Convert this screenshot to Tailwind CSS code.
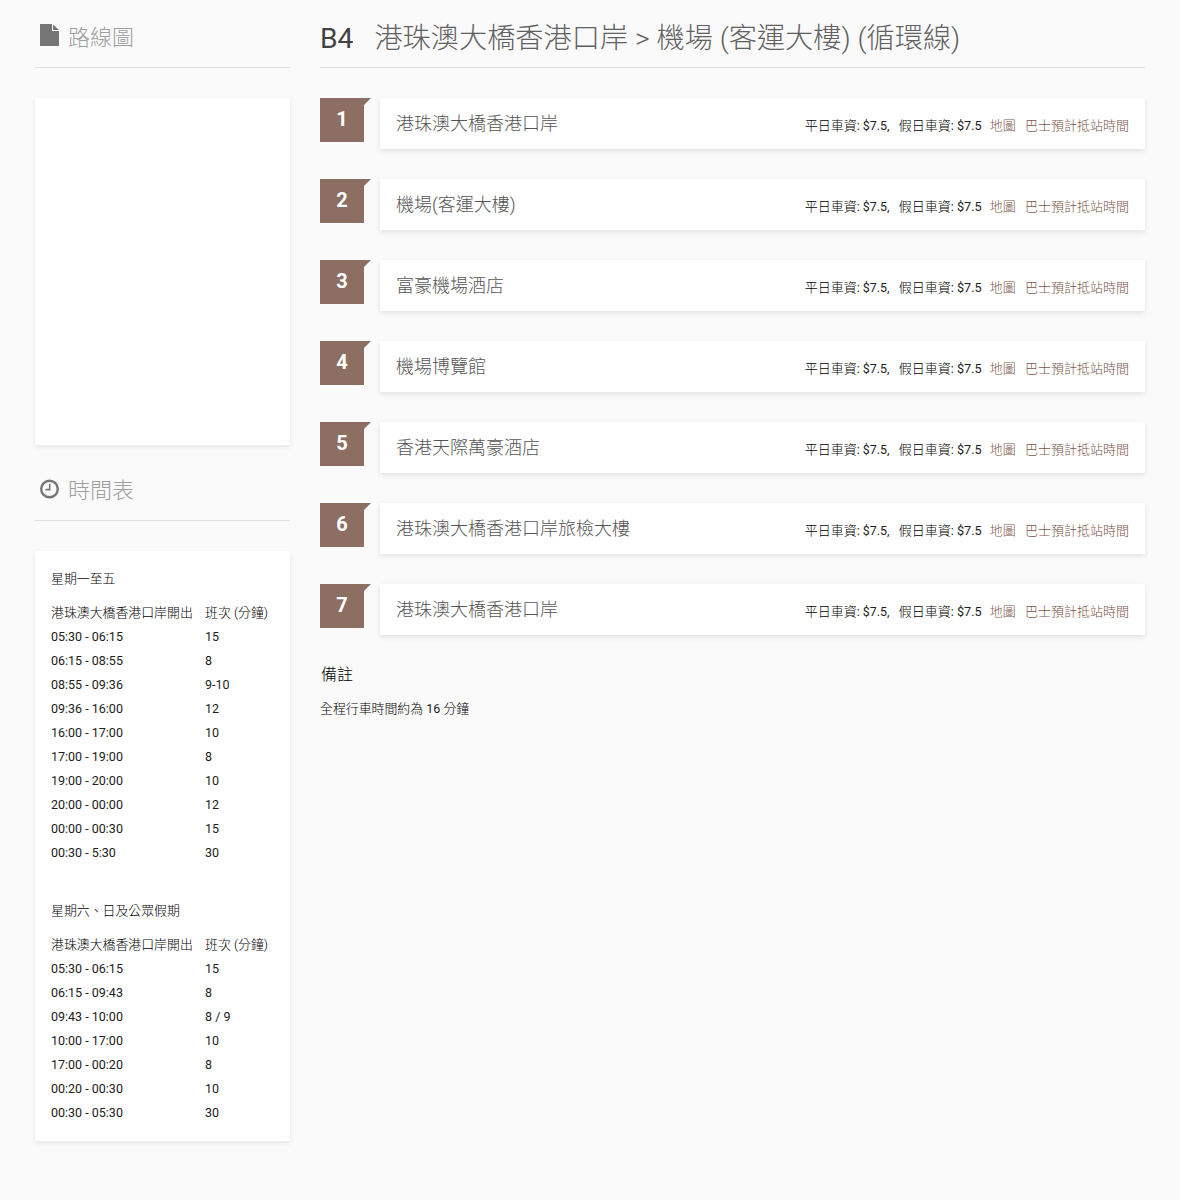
<!DOCTYPE html>
<html lang="zh-Hant">
<head>
  <meta charset="UTF-8" />
  <title>B4 港珠澳大橋香港口岸 > 機場</title>
  <script src="https://cdn.jsdelivr.net/npm/@tailwindcss/browser@4"></script>
</head>
<body class="bg-[#fafafa] font-['Roboto','Noto_Sans_CJK_TC',sans-serif] text-[12.9px] font-light text-[#212121]">
  <div class="flex gap-[30px] pl-[35px] pr-[35px] h-[1200px] overflow-hidden">

    <!-- Left column -->
    <aside class="w-[255px] shrink-0">
      <h2 class="h-[68px] border-b border-[#e0e0e0] flex items-center gap-[9px] pl-[5px] pt-[7px] text-[22px] font-light text-[#9e9e9e]">
        <svg class="w-[19px] h-[22px] mb-[5px]" viewBox="0 0 19 22"><path fill="#757575" d="M0 0H12V7H19V22H0Z"/><path fill="#757575" d="M13 0.5L19 6H13Z"/></svg>
        <span>路線圖</span>
      </h2>
      <div class="mt-[30px] h-[347px] bg-white shadow-[0_2px_5px_rgba(0,0,0,0.08)]"></div>

      <h2 class="mt-[23px] h-[53px] border-b border-[#e0e0e0] flex items-center gap-[9px] pl-[5px] pb-[8px] text-[22px] font-light text-[#9e9e9e]">
        <svg class="w-[19px] h-[20px] mb-[3px]" viewBox="0 0 19 20" fill="none" stroke="#757575"><circle cx="9.5" cy="10" r="8.3" stroke-width="2.4"/><path d="M9.7 4.8V10.6H5.5" stroke-width="1.6"/></svg>
        <span>時間表</span>
      </h2>
      <div class="mt-[30px] h-[590px] bg-white shadow-[0_2px_5px_rgba(0,0,0,0.08)] px-4 pt-[19px]">
        <p class="h-[18px] leading-[18px] text-black">星期一至五</p>
        <table class="mt-[13px] w-full" id="weekday"></table>
        <p class="mt-[37px] h-[18px] leading-[18px] text-black">星期六、日及公眾假期</p>
        <table class="mt-[13px] w-full" id="holiday"></table>
      </div>
    </aside>

    <!-- Right column -->
    <main class="flex-1">
      <h1 class="h-[68px] border-b border-[#e0e0e0] flex items-center pt-[11px] text-[28.2px] font-light text-[#616161]">
        <span class="text-[#424242] font-normal mr-[21px]">B4</span>
        <span>港珠澳大橋香港口岸 &gt; 機場 (客運大樓) (循環線)</span>
      </h1>
      <ol id="stops" class="mt-[30px] flex flex-col gap-[30px]"></ol>
      <h3 class="mt-[29px] h-[22px] leading-[22px] text-[16px] font-light pl-px text-black">備註</h3>
      <p class="mt-[14px] text-black leading-[18px]">全程行車時間約為 <span class="text-[12.5px] font-normal text-[#212121]">16</span> 分鐘</p>
    </main>
  </div>

  <script>
    const stops = ["港珠澳大橋香港口岸", "機場(客運大樓)", "富豪機場酒店", "機場博覽館", "香港天際萬豪酒店", "港珠澳大橋香港口岸旅檢大樓", "港珠澳大橋香港口岸"];

    document.getElementById("stops").innerHTML = stops.map((name, i) => `
      <li class="flex h-[51px]">
        <div class="relative w-[44px] h-[44px] shrink-0 bg-[#8d6e63] text-white text-[20px] font-bold flex items-center justify-center pb-[3px]">
          ${i + 1}
          <span class="absolute left-full top-0 w-0 h-0 border-t-[7px] border-t-[#8d6e63] border-r-[7px] border-r-transparent"></span>
        </div>
        <div class="ml-4 flex-1 bg-white shadow-[0_2px_5px_rgba(0,0,0,0.1)] flex justify-between pl-4 pr-4">
          <span class="text-[18px] font-light text-[#555] leading-[52px]">${name}</span>
          <span class="mt-[19px] leading-[18px] text-[13px] whitespace-nowrap">
            <span class="text-black">平日車資<span class="text-[12.4px] font-normal text-[#212121]">: $7.5,</span></span>
            <span class="text-black ml-[6px]">假日車資<span class="text-[12.7px] font-normal text-[#212121]">: $7.5</span></span>
            <a class="text-[#795548] ml-[5px]">地圖</a>
            <a class="text-[#795548] ml-[6px]">巴士預計抵站時間</a>
          </span>
        </div>
      </li>`).join("");

    function fillTable(id, rows) {
      const head = `<tr class="h-[24px] text-black"><td class="w-[154px] p-0 whitespace-nowrap">港珠澳大橋香港口岸開出</td><td class="p-0 whitespace-nowrap">班次 (分鐘)</td></tr>`;
      document.getElementById(id).innerHTML = head + rows.map(r =>
        `<tr class="h-[24px] text-[12.5px] font-normal"><td class="p-0">${r[0]}</td><td class="p-0">${r[1]}</td></tr>`).join("");
    }

    fillTable("weekday", [["05:30 - 06:15", "15"], ["06:15 - 08:55", "8"], ["08:55 - 09:36", "9-10"], ["09:36 - 16:00", "12"], ["16:00 - 17:00", "10"], ["17:00 - 19:00", "8"], ["19:00 - 20:00", "10"], ["20:00 - 00:00", "12"], ["00:00 - 00:30", "15"], ["00:30 - 5:30", "30"]]);
    fillTable("holiday", [["05:30 - 06:15", "15"], ["06:15 - 09:43", "8"], ["09:43 - 10:00", "8 / 9"], ["10:00 - 17:00", "10"], ["17:00 - 00:20", "8"], ["00:20 - 00:30", "10"], ["00:30 - 05:30", "30"]]);
  </script>
</body>
</html>
